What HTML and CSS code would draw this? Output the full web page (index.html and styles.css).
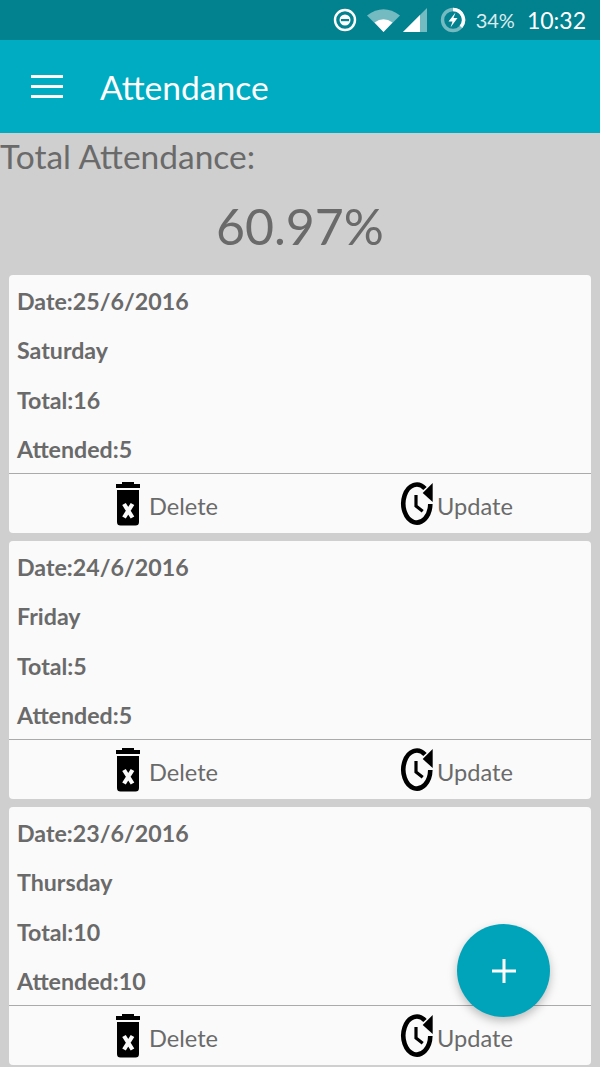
FILE: index.html
```html
<!DOCTYPE html>
<html lang="en">
<head>
    <meta charset="UTF-8">
    <meta name="viewport" content="width=device-width, initial-scale=1.0">
    <title>Attendance</title>
    <link rel="stylesheet" href="styles.css">
</head>
<body>
    <svg class="icon-defs" width="0" height="0">
        <symbol id="trash" viewBox="0 0 24 44">
            <path d="M6 0h12v2h6v4H0V2h6z" fill="#000"/>
            <path d="M1 8h22v32a3.500 3.500 0 0 1-3.500 3.500h-15A3.500 3.500 0 0 1 1 40z" fill="#000"/>
            <path d="M8 22l8.500 13.500M16.500 22L8 35.500" stroke="#fafafa" stroke-width="4.200" fill="none"/>
        </symbol>
        <symbol id="clock" viewBox="0 0 34 44">
            <path d="M25 6.500A13.500 19 0 1 0 30.300 22" fill="none" stroke="#000" stroke-width="4.600"/>
            <path d="M22.700 11L32.700 1v19z" fill="#000"/>
            <path d="M16 13v11l6.700 5.300" fill="none" stroke="#000" stroke-width="3.200"/>
        </symbol>
    </svg>

    <div class="status-bar">
        <svg class="st-dnd" width="24" height="24" viewBox="0 0 24 24">
            <circle cx="12" cy="12" r="10" fill="none" stroke="#fff" stroke-width="2.400"/>
            <circle cx="12" cy="12" r="5.500" fill="#fff"/>
            <rect x="8" y="11" width="8" height="2.200" fill="#02818f"/>
        </svg>
        <svg class="st-wifi" width="33" height="24" viewBox="0 0 33 24">
            <path d="M0 7.500Q16.500-5 33 7.500L16.500 24z" fill="#fff" opacity="0.45"/>
            <path d="M7.500 14.500Q16.500 8 25.500 14.500L16.500 24z" fill="#fff"/>
        </svg>
        <svg class="st-signal" width="24" height="24" viewBox="0 0 24 24">
            <path d="M0 24L24 0v24z" fill="#fff" opacity="0.45"/>
            <path d="M0 24L17 7v17z" fill="#fff"/>
        </svg>
        <svg class="st-battery" width="26" height="26" viewBox="0 0 26 26">
            <circle cx="13" cy="13" r="10.500" fill="none" stroke="#fff" stroke-opacity="0.45" stroke-width="3.400"/>
            <path d="M13 2.500A10.500 10.500 0 0 1 21 19.800" fill="none" stroke="#fff" stroke-width="3.400"/>
            <path d="M15.500 5.500l-7 9h4L10.500 20.500l7-9.500h-4z" fill="#fff"/>
        </svg>
        <span class="st-pct">34%</span>
        <span class="st-time">10:32</span>
    </div>

    <div class="app-bar">
        <div class="menu-icon"><span></span><span></span><span></span></div>
        <div class="app-title">Attendance</div>
    </div>

    <div class="total-label">Total Attendance:</div>
    <div class="total-value">60.97%</div>

    <div class="card">
        <div class="lines">
            <p>Date:25/6/2016</p>
            <p>Saturday</p>
            <p>Total:16</p>
            <p>Attended:5</p>
        </div>
        <div class="actions">
            <div class="action action-delete"><svg width="24" height="44"><use href="#trash"/></svg><span>Delete</span></div>
            <div class="action action-update"><svg width="34" height="44"><use href="#clock"/></svg><span>Update</span></div>
        </div>
    </div>

    <div class="card">
        <div class="lines">
            <p>Date:24/6/2016</p>
            <p>Friday</p>
            <p>Total:5</p>
            <p>Attended:5</p>
        </div>
        <div class="actions">
            <div class="action action-delete"><svg width="24" height="44"><use href="#trash"/></svg><span>Delete</span></div>
            <div class="action action-update"><svg width="34" height="44"><use href="#clock"/></svg><span>Update</span></div>
        </div>
    </div>

    <div class="card">
        <div class="lines">
            <p>Date:23/6/2016</p>
            <p>Thursday</p>
            <p>Total:10</p>
            <p>Attended:10</p>
        </div>
        <div class="actions">
            <div class="action action-delete"><svg width="24" height="44"><use href="#trash"/></svg><span>Delete</span></div>
            <div class="action action-update"><svg width="34" height="44"><use href="#clock"/></svg><span>Update</span></div>
        </div>
    </div>

    <div class="fab">
        <svg width="24" height="24" viewBox="0 0 24 24"><path d="M12 0v24M0 12h24" stroke="#fff" stroke-width="3"/></svg>
    </div>
</body>
</html>
```

FILE: styles.css
```css
* {
    box-sizing: border-box;
    margin: 0;
    padding: 0;
}

html, body {
    height: 1067px;
    overflow: hidden;
}

body {
    background-color: #cfcfcf;
    font-family: Lato, "Open Sans", sans-serif;
    color: #6a6a6a;
    position: relative;
}

.icon-defs {
    display: block;
    height: 0;
}

.status-bar {
    height: 40px;
    background-color: #02818f;
    color: #fff;
    display: flex;
    align-items: center;
    justify-content: flex-end;
    padding-right: 14px;
}

.st-dnd {
    margin-right: 10px;
}

.st-wifi {
    margin-right: 3px;
}

.st-battery {
    margin-left: 13px;
    margin-right: 10px;
}

.st-pct {
    font-size: 20px;
    opacity: 0.85;
    margin-right: 12px;
}

.st-time {
    font-size: 23px;
}

.app-bar {
    height: 93px;
    background-color: #00acc1;
    display: flex;
    align-items: center;
    padding-left: 31px;
}

.menu-icon {
    width: 32px;
    display: flex;
    flex-direction: column;
    gap: 7px;
    margin-right: 37px;
    margin-top: -1px;
}

.menu-icon span {
    display: block;
    height: 3px;
    background-color: #fff;
}

.app-title {
    font-size: 33.600px;
    color: #fff;
}

.total-label {
    font-size: 33.500px;
    line-height: 40px;
    height: 48px;
    padding-top: 3px;
}

.total-value {
    font-size: 50px;
    line-height: 60px;
    height: 94px;
    padding-top: 15px;
    text-align: center;
}

.card {
    height: 258px;
    margin: 0 9px 8px;
    background-color: #fafafa;
    border-radius: 4px;
}

.lines {
    height: 199px;
    border-bottom: 1px solid #aaa;
    padding: 1.500px 8px 0;
}

.lines p {
    font-size: 23.200px;
    font-weight: 700;
    line-height: 49.600px;
    white-space: nowrap;
}

.actions {
    height: 59px;
    display: flex;
}

.action {
    position: relative;
    display: flex;
    align-items: center;
    font-size: 23.600px;
    height: 100%;
}

.action svg {
    display: block;
}

.action-delete {
    padding-left: 107px;
    width: 391px;
}

.action-delete span {
    margin-left: 9px;
    padding-top: 4px;
}

.action-update span {
    margin-left: 3px;
    padding-top: 4px;
}

.fab {
    position: absolute;
    left: 457px;
    top: 924px;
    width: 93px;
    height: 93px;
    border-radius: 50%;
    background-color: #00a4ba;
    box-shadow: 0 4px 10px rgba(0, 0, 0, 0.25);
    display: flex;
    align-items: center;
    justify-content: center;
}
```
